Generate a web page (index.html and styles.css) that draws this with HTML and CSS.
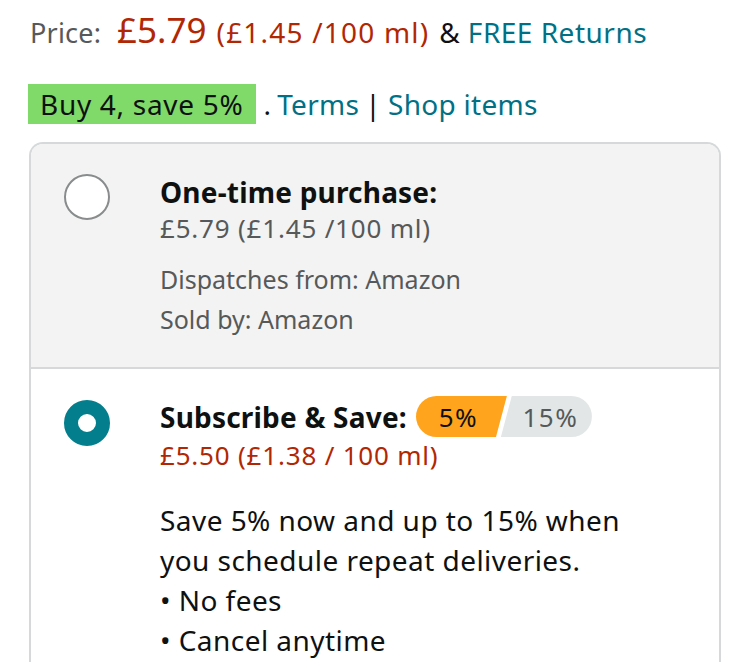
FILE: index.html
```html
<!DOCTYPE html>
<html lang="en">
<head>
<meta charset="utf-8">
<link rel="stylesheet" href="styles.css">
</head>
<body>
<div class="page">
  <div class="price-row">
    <span class="label">Price:</span>
    <span class="price">£5.79</span>
    <span class="unit">(£1.45 /100 ml)</span>
    <span class="amp">&amp;</span>
    <span class="link returns">FREE Returns</span>
  </div>
  <div class="promo-row">
    <span class="promo">Buy 4, save 5%</span>
    <span class="dot">.</span>
    <span class="link">Terms</span>
    <span class="sep">|</span>
    <span class="link">Shop items</span>
  </div>
  <div class="card">
    <div class="option option-muted">
      <div class="radio"></div>
      <div class="opt-body">
        <div class="opt-title">One-time purchase:</div>
        <div class="opt-price opt-price-gray">£5.79 (£1.45 /100 ml)</div>
        <div class="meta">
          <div>Dispatches from: Amazon</div>
          <div>Sold by: Amazon</div>
        </div>
      </div>
    </div>
    <div class="option option-sub">
      <div class="radio radio-on"></div>
      <div class="opt-body">
        <div class="opt-title title-flex">Subscribe &amp; Save:
          <span class="tiers"><span class="tier tier-on">5%</span><span class="tier tier-off">15%</span></span>
        </div>
        <div class="opt-price opt-price-red">£5.50 (£1.38 / 100 ml)</div>
        <div class="desc">
          <div>Save 5% now and up to 15% when you schedule repeat deliveries.</div>
          <div>• No fees</div>
          <div>• Cancel anytime</div>
        </div>
      </div>
    </div>
  </div>
</div>
</body>
</html>
```
FILE: styles.css
```css
html, body {
  margin: 0;
  padding: 0;
  background: #ffffff;
}
body {
  font-family: "Noto Sans", "Open Sans", sans-serif;
  color: #0f1111;
  overflow: hidden;
}
.page {
  width: 750px;
  height: 662px;
  padding: 10px 0 0 30px;
  box-sizing: border-box;
}
.price-row {
  display: flex;
  align-items: baseline;
  font-size: 28px;
  line-height: 40px;
  height: 40px;
  white-space: nowrap;
}
.label {
  color: #565959;
  font-size: 27px;
  letter-spacing: 0.2px;
  margin-right: 16px;
}
.price {
  color: #b12704;
  font-size: 35px;
  margin-right: 10px;
}
.unit {
  color: #b12704;
  letter-spacing: 1.2px;
  margin-right: 10px;
}
.amp {
  margin-right: 8px;
}
.returns {
  letter-spacing: 0.5px;
}
.link {
  color: #007185;
}
.promo-row {
  margin-top: 34px;
  margin-left: -2px;
  display: flex;
  align-items: center;
  font-size: 28px;
  letter-spacing: 0.3px;
  line-height: 40px;
  white-space: nowrap;
}
.promo {
  background: #7fda69;
  padding: 0 13px 0 12px;
  height: 40px;
  letter-spacing: 0.7px;
}
.dot { margin: 0 6px 0 7px; }
.sep { color: #0f1111; margin: 0 7px 0 6px; }
.card {
  margin-top: 18px;
  margin-left: -1px;
  width: 692px;
  box-sizing: border-box;
  border: 2px solid #d5d9d9;
  border-bottom: none;
  border-radius: 14px 14px 0 0;
  overflow: hidden;
  height: 540px;
}
.option {
  display: flex;
  padding: 30px 20px 28px 33px;
  gap: 50px;
}
.option-muted {
  background: #f3f3f3;
  border-bottom: 2px solid #d5d9d9;
  height: 225px;
  box-sizing: border-box;
}
.option-sub {
  padding-top: 31px;
}
.radio {
  flex: none;
  width: 46px;
  height: 46px;
  box-sizing: border-box;
  border-radius: 50%;
  border: 2px solid #888c8c;
  background: #ffffff;
}
.radio-on {
  border: 14px solid #037e8c;
  background: #ffffff;
}
.opt-body {
  display: flex;
  flex-direction: column;
}
.opt-title {
  font-weight: 700;
  font-size: 28px;
  letter-spacing: 0.2px;
  line-height: 36px;
  color: #0f1111;
  white-space: nowrap;
}
.title-flex {
  display: flex;
  align-items: center;
  gap: 9px;
  margin-top: -4px;
  height: 41px;
}
.opt-price {
  font-size: 26px;
  letter-spacing: 0.8px;
  line-height: 36px;
  white-space: nowrap;
}
.opt-price-gray {
  color: #565959;
}
.opt-price-red {
  color: #b12704;
}
.meta {
  margin-top: 13px;
  color: #565959;
  font-size: 25px;
  line-height: 40px;
}
.tiers {
  display: flex;
  height: 41px;
  font-weight: 400;
  font-size: 26px;
  letter-spacing: 1.4px;
}
.tier {
  display: flex;
  align-items: center;
  justify-content: center;
}
.tier-on {
  background: #ffa41c;
  color: #0f1111;
  width: 91px;
  border-radius: 21px 0 0 21px;
  clip-path: polygon(0 0, 100% 0, 88% 100%, 0 100%);
  padding-right: 6px;
  box-sizing: border-box;
}
.tier-off {
  background: #e3e6e6;
  color: #565959;
  width: 91px;
  margin-left: -6px;
  border-radius: 0 21px 21px 0;
  clip-path: polygon(12% 0, 100% 0, 100% 100%, 0 100%);
  padding-left: 8px;
  box-sizing: border-box;
}
.desc {
  margin-top: 27px;
  font-size: 28px;
  letter-spacing: 0.45px;
  line-height: 40px;
  width: 500px;
}
```
